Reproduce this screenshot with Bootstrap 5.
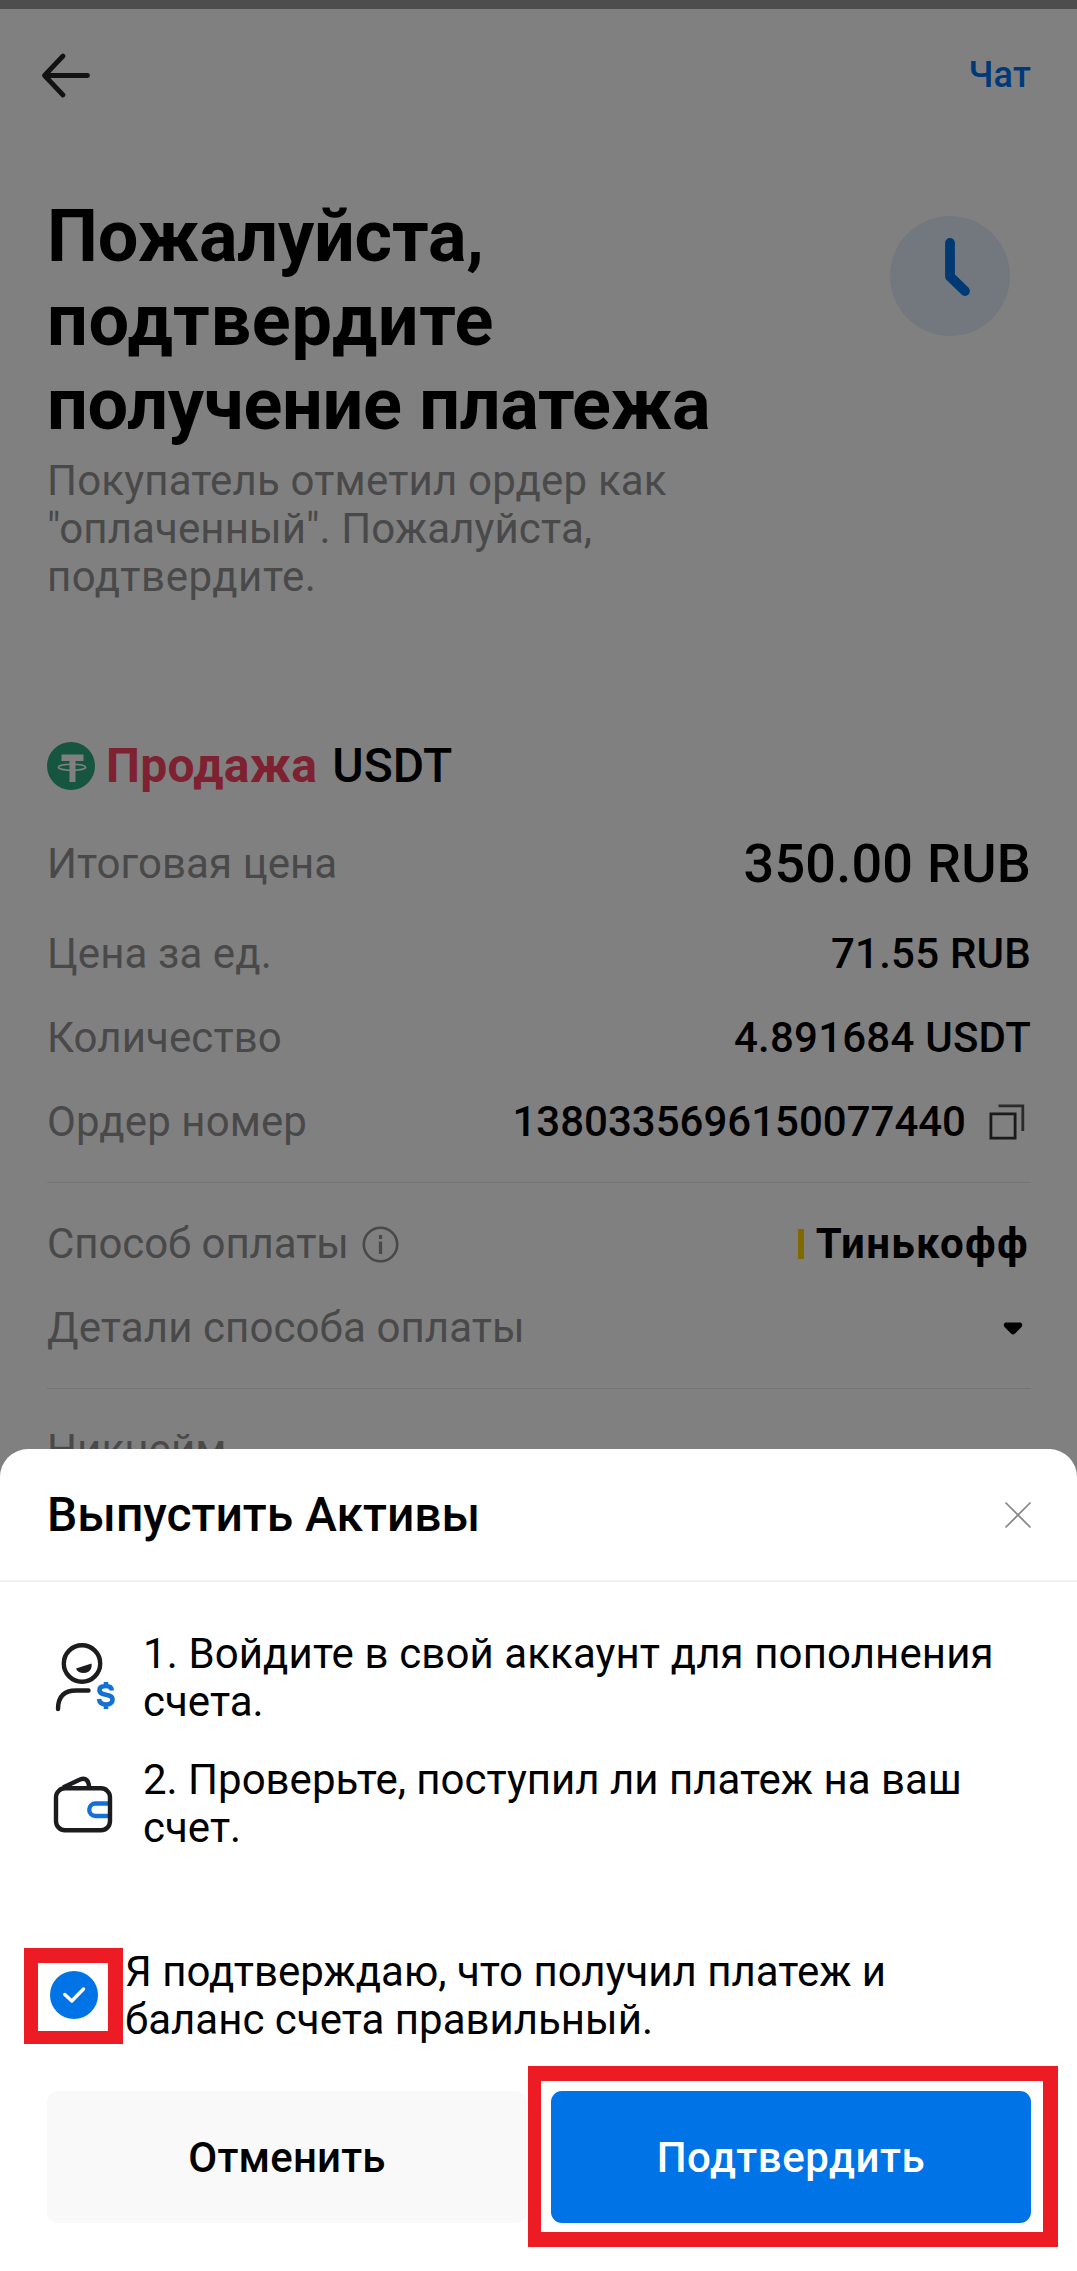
<!DOCTYPE html>
<html lang="ru">
<head>
<meta charset="utf-8">
<meta name="viewport" content="width=device-width, initial-scale=1">
<title>Выпустить Активы</title>
<link href="https://cdn.jsdelivr.net/npm/bootstrap@5.3.0/dist/css/bootstrap.min.css" rel="stylesheet">
<style>
body{font-family:Roboto,"Noto Sans",sans-serif;font-size:42px;line-height:48px;color:#000;background:#808080}
.screen{height:2271px;background:#808080;border-top:9px solid #4d4d4d}
.screen-body,.topbar{padding-left:47px;padding-right:46px}
.topbar{height:132px}
.chat-link{font-size:36px;font-weight:500;color:#00397a;text-decoration:none;letter-spacing:.2px}
.back-icon{margin-left:-7px}
.hero{padding-top:54px}
.hero-title{font-size:72px;line-height:84px;font-weight:700;margin-bottom:10px}
.title-a{letter-spacing:-.2px}
.title-b{letter-spacing:.75px}
.title-c{letter-spacing:-.28px}
.note-a{letter-spacing:.18px}
.note-b{letter-spacing:.1px}
.note-c{letter-spacing:.55px}
.muted-text{color:#49494a}
.line-item>span.muted-text,.line-total>span.muted-text{letter-spacing:.1px}
.line-item>span.pay-label{letter-spacing:-.08px}
.clock{margin:21px 21px 0 0}
.sell-row{height:56px;margin:137px 0 21px;font-size:48px;font-weight:500}
.sell-word{color:#7e2231;font-weight:700;margin-left:11px;margin-right:15px;letter-spacing:.3px}
.line-item{height:84px}
.line-total{height:97px}
.line-total .value{font-size:54px}
.value{font-weight:500;letter-spacing:.22px}
.order-no{letter-spacing:0}
.copy-icon{margin:0 6px 0 23px}
.info-icon{margin-left:13px}
.caret-icon{margin-right:8px}
.rule{height:1px;background:#747474;margin:18px 0 19px}
.bank-bar{width:6px;height:30px;background:#806a00;margin-right:12px}
.bank-name{letter-spacing:1.3px;margin-right:2px}
.sheet{height:822px;border-radius:28px 28px 0 0;overflow:hidden}
.sheet-head{height:133px;border-bottom:2px solid #f2f2f2;padding:0 45px 0 47px}
.sheet-title{font-size:48px;font-weight:500}
.steps{padding:48px 0 0 47px;gap:30px}
.step-icon{width:96px}
.step-a{letter-spacing:.11px}
.confirm{padding:96px 0 0 24px}
.check-mark-box{width:99px;height:96px;border:solid #ed1c24;border-width:15px 15px 13px 14px;padding:8px 0 0 12px;margin-right:2px}
.actions{padding:22px 0 0 47px;gap:1px}
.action-btn{width:480px;height:132px;border-radius:11px;border:0;font-size:42px;font-weight:500;padding:0}
.btn-cancel{margin-top:25px;background:#f9f9f9;color:#000;letter-spacing:.2px}
.btn-confirm{background:#0073e6;color:#fff;letter-spacing:.6px}
.frame{width:530px;height:181px;border:15px solid #ed1c24;border-left-width:13px;padding:10px 0 0 10px;background:#fff}
svg{display:block;flex:none}
</style>
</head>
<body>
<main class="screen position-relative overflow-hidden">
  <header class="topbar d-flex align-items-center justify-content-between">
    <svg class="back-icon" width="52" height="48" viewBox="0 0 52 48" fill="none" stroke="#121212" stroke-width="4.800" stroke-linecap="round" stroke-linejoin="round"><path d="M23 5 4.500 24.500 23 44M5 24.500H47.500"/></svg>
    <a class="chat-link" href="#"><span>Чат</span></a>
  </header>
  <div class="screen-body">
    <section class="hero d-flex justify-content-between align-items-start">
      <div class="text-nowrap">
        <h1 class="hero-title"><span class="title-a">Пожалуйста,</span><br><span class="title-b">подтвердите</span><br><span class="title-c">получение платежа</span></h1>
        <p class="muted-text mb-0"><span class="note-a">Покупатель отметил ордер как</span><br><span class="note-b">"оплаченный". Пожалуйста,</span><br><span class="note-c">подтвердите.</span></p>
      </div>
      <svg class="clock" width="120" height="120" viewBox="0 0 120 120"><circle cx="60" cy="60" r="60" fill="#73787f"/><path d="M60 27V60.500L75 75" fill="none" stroke="#003a75" stroke-width="9.800" stroke-linecap="round" stroke-linejoin="round"/></svg>
    </section>
    <section class="sell-row d-flex align-items-center">
      <svg width="48" height="48" viewBox="0 0 48 48"><circle cx="24" cy="24" r="24" fill="#165540"/><path d="M14.500 12.500h22v6.500h-8v21h-6V19h-8z" fill="#808080"/><ellipse cx="25" cy="25.200" rx="13.600" ry="3" fill="none" stroke="#808080" stroke-width="1.600"/></svg>
      <span class="sell-word">Продажа</span><span>USDT</span>
    </section>
    <div class="line-total d-flex align-items-center justify-content-between"><span class="muted-text">Итоговая цена</span><span class="value">350.00 RUB</span></div>
    <div class="line-item d-flex align-items-center justify-content-between"><span class="muted-text">Цена за ед.</span><span class="value">71.55 RUB</span></div>
    <div class="line-item d-flex align-items-center justify-content-between"><span class="muted-text">Количество</span><span class="value">4.891684 USDT</span></div>
    <div class="line-item d-flex align-items-center justify-content-between"><span class="muted-text">Ордер номер</span>
      <span class="d-flex align-items-center"><span class="value order-no">1380335696150077440</span>
      <svg class="copy-icon" width="36" height="36" viewBox="0 0 36 36" fill="none" stroke="#1a1a1a" stroke-width="2.800"><path d="M1.900 9.900h24.200v24.200H1.900z"/><path d="M9.500 1.900h24.300V27" stroke="#2b2b2b"/></svg></span></div>
    <div class="rule"></div>
    <div class="line-item d-flex align-items-center justify-content-between">
      <span class="d-flex align-items-center muted-text pay-label"><span>Способ оплаты</span>
      <svg class="info-icon" width="37" height="37" viewBox="0 0 37 37" fill="none" stroke="#49494a"><circle cx="18.500" cy="18.500" r="16.700" stroke-width="2.600"/><path d="M18.500 15.500V28M18.500 9v4" stroke-width="3.200"/></svg></span>
      <span class="d-flex align-items-center"><span class="bank-bar"></span><span class="bank-name fw-bold">Тинькофф</span></span></div>
    <div class="line-item d-flex align-items-center justify-content-between"><span class="muted-text">Детали способа оплаты</span>
      <svg class="caret-icon" width="20" height="13" viewBox="0 0 20 13"><path d="M3 .5h14c2 0 3 2.500 1.500 4.500l-6.500 6.500c-1.300 1.200-2.700 1.200-4 0L1.500 5C0 3 1 .5 3 .5z" fill="#000"/></svg></div>
    <div class="rule"></div>
    <div class="line-item d-flex align-items-center"><span class="muted-text">Никнейм</span></div>
  </div>

  <section class="sheet position-absolute bottom-0 start-0 w-100 bg-white" role="dialog">
    <div class="sheet-head d-flex align-items-center justify-content-between">
      <span class="sheet-title">Выпустить Активы</span>
      <svg width="28" height="28" viewBox="0 0 28 28" stroke="#85868a" stroke-width="1.700"><path d="M1.500 1.500l25 25M26.500 1.500l-25 25"/></svg>
    </div>
    <div class="steps d-flex flex-column text-nowrap">
      <div class="d-flex align-items-center">
        <div class="step-icon"><svg width="72" height="72" viewBox="47 1642 72 72" fill="none" stroke="#1c1c1e" stroke-width="4.400" stroke-linecap="round"><circle cx="82" cy="1663.500" r="18.200"/><path d="M58 1709C58 1696 65 1690.500 76 1690.500H88.500"/><path d="M76 1668.500L91.500 1663.500C92.500 1669 89 1673 84 1673 80 1673 77 1671.500 76 1668.500z" fill="#1c1c1e" stroke="none"/><path d="M112 1690.500C111.500 1687 109 1686 106 1686 102 1686 99.500 1687.500 99.500 1690 99.500 1697 112.500 1692.500 112.500 1699.500 112.500 1703 109.500 1704.500 106 1704.500 102 1704.500 99.500 1703 99 1699M106 1682v4M106 1705v4" stroke="#1371d6" stroke-width="4.600" stroke-linecap="butt"/></svg></div>
        <div><span class="step-a">1. Войдите в свой аккаунт для пополнения</span><br>счета.</div>
      </div>
      <div class="d-flex align-items-center">
        <div class="step-icon"><svg width="72" height="72" viewBox="47 1768 72 72" fill="none" stroke="#1c1c1e" stroke-width="4.400" stroke-linejoin="round"><path d="M108 1803.500H95.500A6.200 6.200 0 0 0 95.500 1816H108" stroke="#1371d6"/><rect x="56" y="1788.300" width="54" height="42" rx="9"/><path d="M63 1787.500L80 1779.500C86 1777 89 1781 89 1787.500"/></svg></div>
        <div>2. Проверьте, поступил ли платеж на ваш<br>счет.</div>
      </div>
    </div>
    <div class="confirm d-flex text-nowrap">
      <div class="check-mark-box"><svg width="48" height="48" viewBox="0 0 48 48"><circle cx="24" cy="24" r="24" fill="#0073e6"/><path d="M14.800 23.500L21.800 30 33.500 18" fill="none" stroke="#fff" stroke-width="3.400" stroke-linecap="round" stroke-linejoin="round"/></svg></div>
      <div>Я подтверждаю, что получил платеж и<br>баланс счета правильный.</div>
    </div>
    <div class="actions d-flex align-items-start">
      <button class="btn action-btn btn-cancel">Отменить</button>
      <div class="frame"><button class="btn action-btn btn-confirm">Подтвердить</button></div>
    </div>
  </section>
</main>
<script src="https://cdn.jsdelivr.net/npm/bootstrap@5.3.0/dist/js/bootstrap.bundle.min.js"></script>
</body>
</html>
